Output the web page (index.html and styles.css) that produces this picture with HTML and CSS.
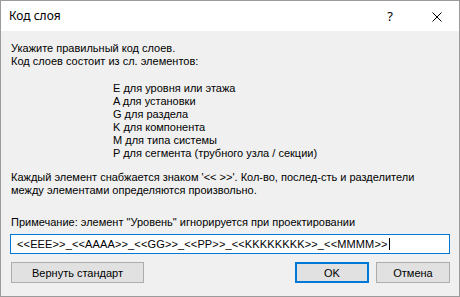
FILE: index.html
```html
<!DOCTYPE html>
<html lang="ru">
  <head>
    <meta charset="UTF-8" />
    <title>Код слоя</title>
    <link rel="stylesheet" href="styles.css">
  </head>
  <body>
    <div class="window">
      <div class="titlebar">
        <span class="title">Код слоя</span>
        <span class="help">?</span>
        <svg class="close" width="10" height="10" viewBox="0 0 10 10">
          <path d="M0.5 0.5 L9.5 9.5 M9.5 0.5 L0.5 9.5" stroke="#000" stroke-width="1" fill="none" />
        </svg>
      </div>
      <div class="content">
        <p class="intro">Укажите правильный код слоев.<br>Код слоев состоит из сл. элементов:</p>
        <ul class="items">
          <li>E для уровня или этажа</li>
          <li>A для установки</li>
          <li>G для раздела</li>
          <li>K для компонента</li>
          <li>M для типа системы</li>
          <li>P для сегмента (трубного узла / секции)</li>
        </ul>
        <p class="desc">Каждый элемент снабжается знаком '&lt;&lt; &gt;&gt;'. Кол-во, послед-сть и разделители<br>между элементами определяются произвольно.</p>
        <p class="note">Примечание: элемент "Уровень" игнорируется при проектировании</p>
        <div class="field"><span class="caret">&lt;&lt;EEE&gt;&gt;_&lt;&lt;AAAA&gt;&gt;_&lt;&lt;GG&gt;&gt;_&lt;&lt;PP&gt;&gt;_&lt;&lt;KKKKKKKK&gt;&gt;_&lt;&lt;MMMM&gt;&gt;</span></div>
        <div class="buttons">
          <button class="btn wide">Вернуть стандарт</button>
          <span class="spacer"></span>
          <button class="btn default">OK</button>
          <button class="btn">Отмена</button>
        </div>
      </div>
    </div>
  </body>
</html>
```

FILE: styles.css
```css
* {
  box-sizing: border-box;
}
body {
  margin: 0;
  background: #f0f0f0;
}
.window {
  width: 460px;
  height: 297px;
  border: 1px solid #9b9b9b;
  background: #f0f0f0;
  display: flex;
  flex-direction: column;
}
.titlebar {
  height: 30px;
  background: #fff;
  display: flex;
  align-items: center;
  padding-left: 8px;
  font-family: "Noto Sans", sans-serif;
  font-size: 12px;
  color: #000;
}
.title {
  flex: 1;
  margin-top: -1px;
}
.help {
  font-size: 13px;
  margin-right: 39px;
  margin-top: -1px;
}
.close {
  margin-right: 17px;
  margin-top: 1px;
}
.content {
  flex: 1;
  padding: 11px 9px 0 9px;
  font-family: "Liberation Sans", Arial, sans-serif;
  font-size: 11px;
  line-height: 13px;
  color: #000;
  display: flex;
  flex-direction: column;
}
.content p {
  margin: 0;
  padding-left: 1px;
}
.items {
  list-style: none;
  margin: 14px 0 0 0;
  padding-left: 103px;
}
.desc {
  margin-top: 11px !important;
}
.note {
  margin-top: 19px !important;
}
.field {
  margin-top: 5px;
  height: 20px;
  width: 440px;
  background: #fff;
  border: 1px solid #0078d7;
  padding: 3px 0 0 6px;
  font-size: 11px;
  letter-spacing: 0.14px;
  white-space: nowrap;
}
.caret {
  border-right: 1px solid #000;
  padding-right: 1px;
}
.buttons {
  display: flex;
  margin-top: 8px;
  padding-left: 1px;
}
.spacer {
  flex: 1;
}
.btn {
  height: 21px;
  width: 74px;
  background: #e1e1e1;
  border: 1px solid #adadad;
  font-family: "Liberation Sans", Arial, sans-serif;
  font-size: 11px;
  color: #000;
  padding: 0;
  margin-left: 7px;
}
.btn.wide {
  width: 133px;
  margin-left: 0;
}
.btn.default {
  border: 2px solid #0078d7;
}
```
